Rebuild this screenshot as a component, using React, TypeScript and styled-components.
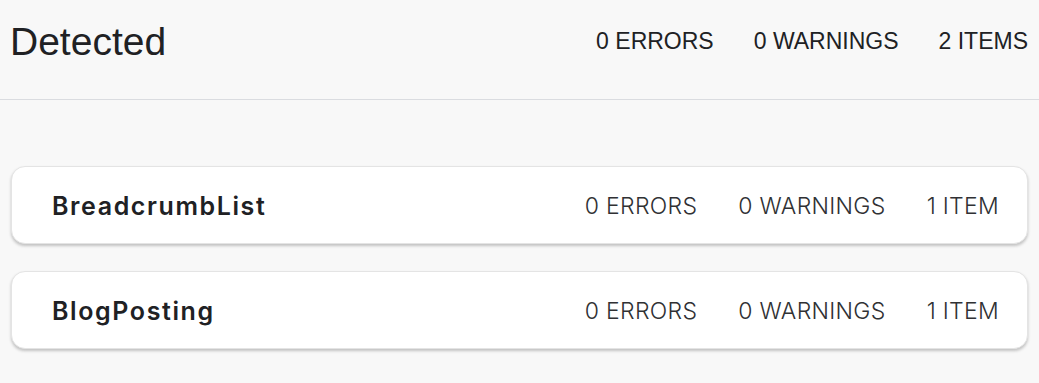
import React from "react";
import styled, { createGlobalStyle } from "styled-components";

const Global = createGlobalStyle`
  html, body { margin: 0; padding: 0; background: #f8f8f8; }
  body { font-family: "Liberation Sans", Arial, sans-serif; color: #202124; }
`;

const Page = styled.div`
  width: 1039px;
  height: 383px;
  overflow: hidden;
  background: #f8f8f8;
`;

const Header = styled.header`
  height: 100px;
  box-sizing: border-box;
  border-bottom: 1px solid #dadce0;
  display: flex;
  align-items: center;
  justify-content: space-between;
  padding: 0 11px 17px 10px;
`;

const Title = styled.h1`
  margin: 0;
  font-family: "Liberation Sans", Arial, sans-serif;
  font-weight: 400;
  font-size: 39px;
  line-height: 1;
  color: #202124;
`;

const Stats = styled.div<{ $gap: number }>`
  display: flex;
  gap: ${(p) => p.$gap}px;
`;

const HeaderStat = styled.span`
  font-family: "Liberation Sans", Arial, sans-serif;
  font-size: 23px;
  color: #202124;
`;

const CardStat = styled.span`
  font-family: Inter, "Noto Sans", sans-serif;
  font-size: 23px;
  font-weight: 300;
  letter-spacing: 0.3px;
  color: #303134;
`;

const List = styled.div`
  display: flex;
  flex-direction: column;
  gap: 27px;
  padding: 66px 11px 0 11px;
`;

const Card = styled.div`
  height: 78px;
  box-sizing: border-box;
  background: #fff;
  border: 1px solid #e4e4e4;
  border-radius: 14px;
  box-shadow: 0 2px 3px rgba(0, 0, 0, 0.22);
  display: flex;
  align-items: center;
  justify-content: space-between;
  padding: 2px 28px 0 40px;
`;

const CardTitle = styled.span`
  font-family: Inter, "Noto Sans", sans-serif;
  font-size: 25px;
  font-weight: 600;
  letter-spacing: 1.6px;
  color: #202124;
`;

const items = [
  { name: "BreadcrumbList", count: "1 ITEM" },
  { name: "BlogPosting", count: "1 ITEM" },
];

export default function App() {
  return (
    <Page>
      <Global />
      <Header>
        <Title>Detected</Title>
        <Stats $gap={40}>
          <HeaderStat>0 ERRORS</HeaderStat>
          <HeaderStat>0 WARNINGS</HeaderStat>
          <HeaderStat>2 ITEMS</HeaderStat>
        </Stats>
      </Header>
      <List>
        {items.map((it) => (
          <Card key={it.name}>
            <CardTitle>{it.name}</CardTitle>
            <Stats $gap={41}>
              <CardStat>0 ERRORS</CardStat>
              <CardStat>0 WARNINGS</CardStat>
              <CardStat>{it.count}</CardStat>
            </Stats>
          </Card>
        ))}
      </List>
    </Page>
  );
}
